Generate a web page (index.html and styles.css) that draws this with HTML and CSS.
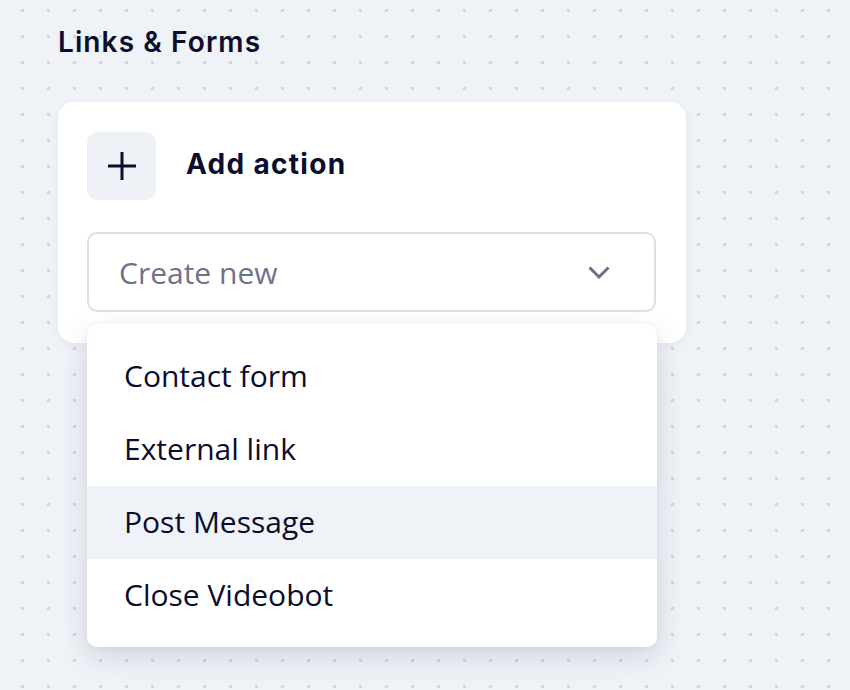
FILE: index.html
```html
<!DOCTYPE html>
<html lang="en">
<head>
    <meta charset="UTF-8">
    <meta name="viewport" content="width=device-width, initial-scale=1.0">
    <title>Links &amp; Forms</title>
    <link rel="stylesheet" href="styles.css">
</head>
<body>
<h2 class="panel-title">Links &amp; Forms</h2>

<div class="action-card">
    <div class="action-head">
        <span class="add-btn">
            <svg width="30" height="30" viewBox="0 0 30 30" fill="none" stroke="#0b0d2e" stroke-width="3">
                <path d="M15 1v28M1 15h28"/>
            </svg>
        </span>
        <span class="action-label">Add action</span>
    </div>

    <div class="select-wrap">
        <div class="select">
            <span class="placeholder">Create new</span>
            <svg width="22" height="13" viewBox="0 0 22 13" fill="none" stroke="#6d7087" stroke-width="3">
                <path d="M1.5 1.5l9.5 9.5 9.5-9.5"/>
            </svg>
        </div>
        <ul class="menu">
            <li>Contact form</li>
            <li>External link</li>
            <li class="active">Post Message</li>
            <li>Close Videobot</li>
        </ul>
    </div>
</div>
</body>
</html>
```

FILE: styles.css
```css
html {
    background-color: #eff2f7;
    background-image: conic-gradient(from 270deg at 3px 3px, #d4d6dc 25%, transparent 0);
    background-size: 26px 26px;
    background-position: 21px 9px;
}
body {
    box-sizing: border-box;
    min-height: 690px;
    margin: 0;
    padding: 25px 0 0 58px;
    font-family: "Open Sans", Arial, sans-serif;
    color: #0b0d2e;
}
.panel-title {
    margin: 0 0 43px;
    font-family: Inter, Arial, sans-serif;
    font-size: 28px;
    line-height: 34px;
    font-weight: 600;
    letter-spacing: 1.1px;
    color: #0b0d2e;
}
.action-card {
    width: 569px;
    padding: 30px 30px 31px 29px;
    background: #fff;
    border-radius: 16px;
    box-shadow: 0 2px 10px rgba(30, 40, 80, 0.05);
}
.action-head {
    display: flex;
    align-items: center;
    gap: 30px;
    margin-bottom: 32px;
}
.add-btn {
    display: flex;
    align-items: center;
    justify-content: center;
    width: 69px;
    height: 68px;
    background-color: #eef1f6;
    border-radius: 10px;
}
.action-label {
    font-family: Inter, Arial, sans-serif;
    font-size: 28px;
    font-weight: 700;
    letter-spacing: 1.3px;
    margin-top: -5px;
}
.select-wrap {
    position: relative;
}
.select {
    display: flex;
    align-items: center;
    justify-content: space-between;
    box-sizing: border-box;
    height: 80px;
    padding: 0 44px 0 30px;
    border: 2px solid #dde0ea;
    border-radius: 10px;
}
.placeholder {
    font-size: 30px;
    color: #6f7289;
}
.menu {
    position: absolute;
    top: calc(100% + 12px);
    left: 0;
    right: -1px;
    margin: 0;
    padding: 16px 0 15px;
    list-style-type: none;
    background: #fff;
    border-radius: 10px;
    box-shadow: 0 10px 30px rgba(25, 35, 70, 0.13), 0 2px 6px rgba(25, 35, 70, 0.05);
}
.menu li {
    height: 73px;
    line-height: 71px;
    padding: 0 37px;
    font-size: 30px;
    color: #0b0d2e;
}
.menu li.active {
    background-color: #eff2f7;
}
```
